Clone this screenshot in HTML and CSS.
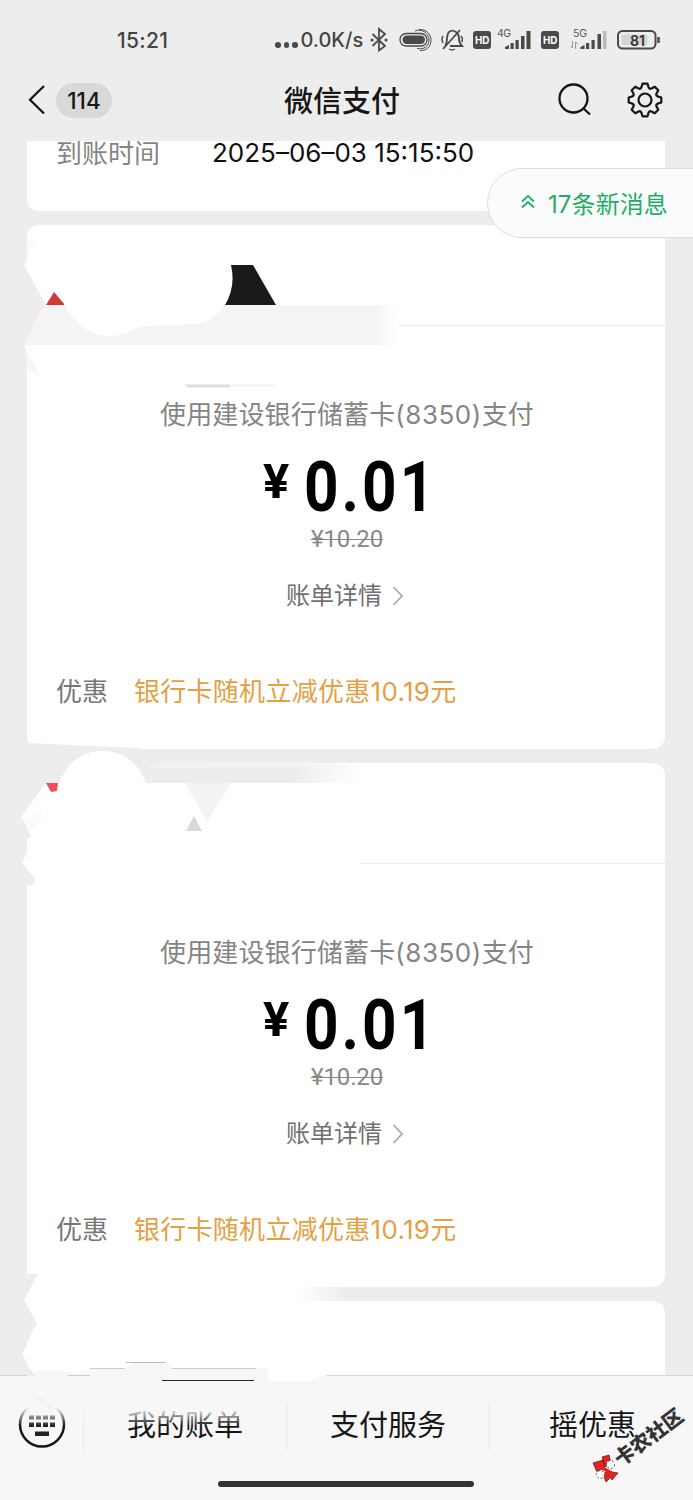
FILE: index.html
```html
<!DOCTYPE html>
<html lang="zh-CN">
<head>
<meta charset="utf-8">
<title>微信支付</title>
<link rel="stylesheet" href="styles.css">
</head>
<body>
<div class="phone">
  <div class="status">
    <span class="clock">15:21</span>
    <span class="speed"><i></i><i></i><i></i><b>0.0K/s</b></span>
    <svg class="status-icons" width="323" height="32" viewBox="370 24 323 32" fill="none" stroke="#4a4a4a">
      <path d="M372.500 34L385 46L379 50.500V29L385 34L372.500 46" stroke-width="1.800"/>
      <path d="M372 40h.1M386 40h.1" stroke-width="3" stroke-linecap="round"/>
      <rect x="400" y="33.500" width="27" height="12.500" rx="6.200" stroke-width="1.300"/>
      <rect x="402.500" y="35.500" width="22.500" height="8.500" rx="4.200" fill="#4a4a4a" stroke="none"/>
      <path d="M415 31C421 28 429 33 429 40C429 46 424 50 417 48.500M419 29.500C426 29 431 34 431 40C431 47 426 51 420 50.500" stroke-width="1"/>
      <path d="M445 46C448 43 446 34 449 32C454 28 459 34 459 38C459 42 460 44 462 46H450M443 49L460 30" stroke-width="1.800"/>
      <path d="M449 49Q452 51 455 49M443 36q-2 3 0 7M461 36q2 2 1 6" stroke-width="1.500"/>
      <g fill="#4a4a4a" stroke="none">
        <rect x="473" y="31" width="18" height="18" rx="3"/><rect x="541" y="31" width="18" height="18" rx="3"/>
        <path d="M505 49v-2l4-2v4zM510.500 49v-6h3.200v6zM515.500 49v-9h3.200v9zM521 49v-13h3.500v13zM526.500 49v-18h4v18z"/>
        <path d="M580.500 49v-2l4-2v4zM586 49v-6h3.200v6zM591.500 49v-9h3.200v9zM597.500 49v-15h3.500v15z"/>
        <path d="M603 49v-18h3.500v18z" fill="#bbb"/>
      </g>
      <path d="M572.500 41v7l-2-2M575.500 49v-7l2 2" stroke="#999" stroke-width="1"/>
      <rect x="618" y="31" width="37.500" height="17.500" rx="4.500" stroke-width="2"/>
      <path d="M658.500 37v6" stroke-width="2.500"/>
      <rect x="621.500" y="34.500" width="26" height="10.500" rx="2" fill="#d5d5d5" stroke="none"/>
      <g class="micro" stroke="none">
        <text x="475" y="44" fill="#fff" font-size="11" font-weight="700" textLength="14.500" lengthAdjust="spacingAndGlyphs">HD</text>
        <text x="543" y="44" fill="#fff" font-size="11" font-weight="700" textLength="14.500" lengthAdjust="spacingAndGlyphs">HD</text>
        <text x="497" y="37" fill="#555" font-size="10.500" textLength="14">4G</text>
        <text x="573" y="37" fill="#555" font-size="10.500" textLength="14">5G</text>
        <text x="630" y="45.500" fill="#333" font-size="14" font-weight="600" textLength="15" lengthAdjust="spacingAndGlyphs">81</text>
      </g>
    </svg>
  </div>

  <header class="nav">
    <svg class="back" width="20" height="32" viewBox="0 0 20 32" fill="none" stroke="#161616" stroke-width="2.300"><path d="M17 2L3 15.700L17 29.500"/></svg>
    <span class="unread">114</span>
    <h1>微信支付</h1>
    <svg class="search" width="36" height="36" viewBox="1 0 36 36" fill="none" stroke="#161616" stroke-width="2.300"><circle cx="16.500" cy="16.500" r="14"/><path d="M26.500 26.500L33 32.500"/></svg>
    <svg class="gear" width="38" height="38" viewBox="-19 -19 38 38" fill="none" stroke="#161616" stroke-width="2.200" stroke-linejoin="round">
      <path d="M-2.500-16.300H2.500L3.600-12.600Q4.700-10.700 6.350-11.460L9.760-13.290L13.290-9.760L11.460-6.360Q10.700-4.700 12.600-3.600L16.300-2.500V2.500L12.600 3.600Q10.700 4.700 11.460 6.350L13.290 9.760L9.760 13.290L6.350 11.460Q4.700 10.700 3.600 12.600L2.500 16.300H-2.500L-3.600 12.600Q-4.700 10.700-6.350 11.460L-9.760 13.290L-13.290 9.760L-11.460 6.350Q-10.700 4.700-12.600 3.600L-16.300 2.500V-2.500L-12.600-3.600Q-10.700-4.700-11.460-6.350L-13.290-9.760L-9.760-13.290L-6.350-11.460Q-4.700-10.700-3.600-12.600Z"/>
      <circle r="6.500"/>
    </svg>
  </header>

  <main class="feed">
    <section class="card arrival"><span class="label">到账时间</span><span class="date">2025<em>–</em>06<em>–</em>03 15:15:50</span></section>

    <section class="card bill">
      <div class="merchant"></div>
      <p class="method">使用建设银行储蓄卡<span class="digits">(8350)</span>支付</p>
      <p class="amount"><span class="yen">¥</span><span class="value">0.01</span></p>
      <p class="original"><s>¥10.20</s></p>
      <p class="detail"><span>账单详情</span><svg width="12" height="22" viewBox="0 0 12 22" fill="none" stroke="#aaa" stroke-width="1.800"><path d="M1.500 2L10 11L1.500 20"/></svg></p>
      <p class="discount"><span class="label">优惠</span><span class="offer">银行卡随机立减优惠10.19元</span></p>
    </section>

    <section class="card bill">
      <div class="merchant"></div>
      <p class="method">使用建设银行储蓄卡<span class="digits">(8350)</span>支付</p>
      <p class="amount"><span class="yen">¥</span><span class="value">0.01</span></p>
      <p class="original"><s>¥10.20</s></p>
      <p class="detail"><span>账单详情</span><svg width="12" height="22" viewBox="0 0 12 22" fill="none" stroke="#aaa" stroke-width="1.800"><path d="M1.500 2L10 11L1.500 20"/></svg></p>
      <p class="discount"><span class="label">优惠</span><span class="offer">银行卡随机立减优惠10.19元</span></p>
    </section>

    <section class="card next"></section>
  </main>

  <footer class="tabs">
    <div class="keyboard">
      <svg width="48" height="48" viewBox="0 0 48 48"><circle cx="24" cy="23.500" r="22" fill="none" stroke="#161616" stroke-width="2.500"/>
      <path d="M11 14.500h5v4h-5zM18 14.500h5v4h-5zM25 14.500h5v4h-5zM32 14.500h5v4h-5zM11 21.500h5v4.500h-5zM18 21.500h5v4.500h-5zM25 21.500h5v4.500h-5zM32 21.500h5v4.500h-5zM17 30.500h14v4.500h-14z" fill="#222"/></svg>
    </div>
    <div class="tab">我的账单</div>
    <div class="tab">支付服务</div>
    <div class="tab last">摇优惠</div>
    <div class="home-bar"></div>
  </footer>

  <a class="new-messages"><svg width="14" height="16" viewBox="0 0 14 16" fill="none" stroke="#1fae67" stroke-width="1.700"><path d="M1 7.500L7 2L13 7.500M1 13.500L7 8L13 13.500"/></svg><span>17条新消息</span></a>

  <!-- eraser strokes -->
  <svg class="strokes" width="693" height="1500" viewBox="0 0 693 1500">
    <defs>
      <linearGradient id="white-fade"><stop offset="0" stop-color="#fff"/><stop offset=".85" stop-color="#fff"/><stop offset="1" stop-color="#fff" stop-opacity="0"/></linearGradient>
      <linearGradient id="band"><stop offset="0" stop-color="#f4f4f4"/><stop offset=".94" stop-color="#f4f4f4"/><stop offset="1" stop-color="#fff"/></linearGradient>
      <linearGradient id="gap"><stop offset="0" stop-color="#ededed"/><stop offset=".8" stop-color="#ededed"/><stop offset="1" stop-color="#ededed" stop-opacity="0"/></linearGradient>
      <linearGradient id="tab-fade" x2="0" y2="1"><stop offset="0" stop-color="#f7f7f7"/><stop offset=".45" stop-color="#f7f7f7"/><stop offset="1" stop-color="#f7f7f7" stop-opacity="0"/></linearGradient>
      <filter id="soft"><feGaussianBlur stdDeviation="1.500"/></filter>
    </defs>
    <path d="M28 235L40 238L24 265L28 272Z" fill="#fff"/>
    <path d="M26 242L36 238L26 256Z" fill="#ededed" filter="url(#soft)" opacity=".5"/>
    <path d="M24 265L46 305L40 312L24 345Z" fill="#ededed"/>
    <path d="M46 305H398V345H24L38 314Z" fill="url(#band)"/>
    <path d="M24 345H34V372Z" fill="#fff"/>
    <path d="M26 350L40 376L28 370Z" fill="#ededed" filter="url(#soft)" opacity=".6"/>
    <path d="M46 305L54 292L65 305Z" fill="#d13a38"/>
    <path d="M64 304C75 326 93 336 108 336C125 336 132 331 140 327C165 324 195 326 207 321Q218 315 225 304Z" fill="#fff"/>
    <path d="M231 265H253L276 305H225Q236 287 231 265Z" fill="#1a1a1a"/>
    <path d="M184 384.500h46v3h-42z" fill="#ddd"/><path d="M230 384.500h48v2h-48z" fill="#f3f3f3"/>

    <path d="M27 743L140 748V750H26Z" fill="#ededed"/>
    <path d="M24 763H120L360 764V783H46L22 817Z" fill="url(#gap)"/>
    <path d="M150 764H350V768H150Z" fill="#f6f6f6" opacity=".6" filter="url(#soft)"/>
    <path d="M46 783H65V845H30L32 835L21 817Z" fill="#fff"/>
    <path d="M23 819L43 812L40 822L30 832Z" fill="#fafafa"/>
    <path d="M28 826L32 835L28 840ZM28 850L22 863L36 880L31 886L28 884Z" fill="#fff"/>
    <path d="M26 868L36 880L31 886L26 884ZM26 826L31 836L26 840Z" fill="#ededed"/>
    <path d="M56 796C60 769 78 751 102 751C127 751 141 768 147 785V815H56Z" fill="#fff"/>
    <path d="M46 783H58L57 791L51 792Z" fill="#ed5059"/>
    <path d="M185 783H231L207 822Z" fill="#f3f3f3"/>
    <path d="M194 816L202 831H186Z" fill="#d9d9d9"/>
    <path d="M27 861h333v4h-333z" fill="#fff"/>

    <path d="M28 1286H345V1302H28Z" fill="url(#white-fade)"/>
    <path d="M22 1274H42L20 1304ZM27 1306L37 1323L27 1342ZM27 1364L35 1376H27Z" fill="#ededed"/>
    <path d="M40 1270H290V1375H36L22 1355L37 1323L24 1300Z" fill="#fff"/>
    <path d="M250 1374H330L310 1381H250Z" fill="#fff"/>
    <path d="M34 1382L36 1371H68L75 1374L90 1368H125L135 1362H165L174 1368H268V1382Z" fill="#f7f7f7"/>
    <path d="M90 1368.500h35M172 1368.500h84M68 1375.500h22" stroke="#ccc"/>
    <path d="M126 1362.500h40" stroke="#bbb"/>
    <path d="M162 1380.500h92" stroke="#222" stroke-width="1.200"/>
    <path d="M16 1393H280V1426H16Z" fill="url(#tab-fade)"/>
    <path d="M32 1394L53 1408" stroke="#f0f0f0" stroke-width="3" filter="url(#soft)"/>

    <g transform="translate(605 1468)">
      <g fill="#dd2524" stroke="#551515" stroke-width=".7"><path d="M-12-5L-2-8L0-1L-8 4ZM-3-11L4-13L6-5L0-1ZM0 0L7 4L13 5L7 12ZM-2 6L4 2L6 9L1 14Z"/></g>
      <g fill="#fff" stroke="#322" stroke-width=".8" stroke-dasharray="2 2"><circle cx="5.500" cy="-3.500" r="4"/><circle cx="-4.500" cy="6.500" r="4"/></g>
      <path d="M-10-5L-2-7L0 0L8 4L11 6L6 10L0 3L-6 1Z" fill="#dd2524"/>
    </g>
    <text class="watermark" transform="translate(624.500 1455) rotate(-37)" x="-10" y="7.500" textLength="80">卡农社区</text>
  </svg>
</div>
</body>
</html>
```
FILE: styles.css
```css
* { box-sizing: border-box; }
body { margin: 0; font-family: Inter, "Noto Sans CJK SC", sans-serif; }
p, h1 { margin: 0; }

.phone { position: relative; width: 693px; height: 1500px; overflow: hidden; background: #ededed; display: flex; flex-direction: column; }

.status { height: 60px; padding-top: 20px; display: flex; align-items: center; color: #444; }
.clock { width: 158px; margin-left: 117px; font-size: 21px; font-weight: 500; letter-spacing: .3px; white-space: nowrap; }
.speed { width: 95px; display: flex; align-items: center; gap: 3px; }
.speed i { width: 5.500px; height: 5.500px; border-radius: 50%; background: #4a4a4a; margin-top: 10px; }
.speed b { font-size: 20px; font-weight: 500; white-space: nowrap; }
.micro { font-family: Inter, sans-serif; }

.nav { height: 80px; display: grid; grid-template-columns: 56px 56px 1fr 86px 49px; align-items: center; }
.back { margin-left: 27px; }
.unread { height: 35px; border-radius: 18px; background: #d9d9d9; font-size: 22.500px; font-weight: 500; line-height: 35px; text-align: center; color: #161616; }
.nav h1 { font-size: 29px; font-weight: 500; line-height: 40px; padding: 3px 0 0 172px; color: #161616; }
.gear { margin-left: -18px; }

.feed { flex: 1; min-height: 0; padding: 1px 28px 0 27px; display: flex; flex-direction: column; gap: 14px; }
.card { flex: none; background: #fff; border-radius: 12px; }
.arrival { height: 70px; border-radius: 0 0 12px 12px; padding-left: 29px; display: flex; font-size: 26px; line-height: 26px; white-space: nowrap; }
.label { color: #858585; font-size: 26px; }
.arrival .label { width: 156px; }
.date { font-size: 26px; line-height: 24px; color: #111; }
.date em { font-style: normal; }

.bill { height: 524px; }
.merchant { height: 101px; border-bottom: 1px solid #ececec; margin-bottom: 69px; }
.method { height: 40px; line-height: 40px; padding-left: 133px; font-size: 26px; letter-spacing: .15px; color: #858585; white-space: nowrap; }
.digits { letter-spacing: .5px; }
.amount { height: 70px; margin-top: 17px; padding-left: 236px; display: flex; line-height: 70px; font-family: Roboto, sans-serif; font-weight: 700; color: #000; }
.yen { width: 41px; font-size: 49px; line-height: 60px; }
.value { font-size: 71px; letter-spacing: 3.500px; transform: scaleX(.85); transform-origin: left; }
.original { height: 30px; margin-top: 2px; padding-left: 284px; line-height: 30px; font-family: Roboto, "Noto Sans CJK SC", sans-serif; font-size: 24px; letter-spacing: -.15px; color: #888; }
.original s { text-decoration-thickness: 1px; }
.detail { height: 40px; margin-top: 22px; padding-left: 259px; display: flex; align-items: center; gap: 10px; font-size: 24px; line-height: 40px; color: #707070; }
.discount { height: 40px; margin-top: 56px; padding-left: 29px; display: flex; line-height: 40px; font-size: 26px; white-space: nowrap; }
.discount .label { width: 78px; color: #777; }
.offer { color: #e5a044; letter-spacing: .28px; }
.next { height: 90px; }

.tabs { position: relative; flex: none; height: 125px; padding-top: 25px; background: #f7f7f7; border-top: 1px solid #d5d5d5; display: grid; grid-template-columns: 83px 203px 203px 1fr; align-items: start; }
.keyboard { padding-left: 18px; }
.tab { height: 50px; border-left: 1px solid #e8e8e8; text-align: center; font-size: 29px; line-height: 50px; color: #161616; }
.tab.last { padding-left: 2px; }
.home-bar { position: absolute; left: 218px; bottom: 13px; width: 256px; height: 6px; border-radius: 3px; background: #333; }

.new-messages { position: absolute; top: 168px; right: -2px; width: 208px; height: 70px; border: 1px solid #dcdcdc; border-radius: 35px 0 0 35px; background: #fbfbfb; display: flex; align-items: center; gap: 13px; padding: 0 0 2px 33px; font-size: 24px; letter-spacing: .1px; color: #1fae67; white-space: nowrap; }
.strokes { position: absolute; left: 0; top: 0; }
.watermark { font-family: "Noto Sans CJK SC", sans-serif; font-size: 20px; font-weight: 900; fill: #333; }
```
